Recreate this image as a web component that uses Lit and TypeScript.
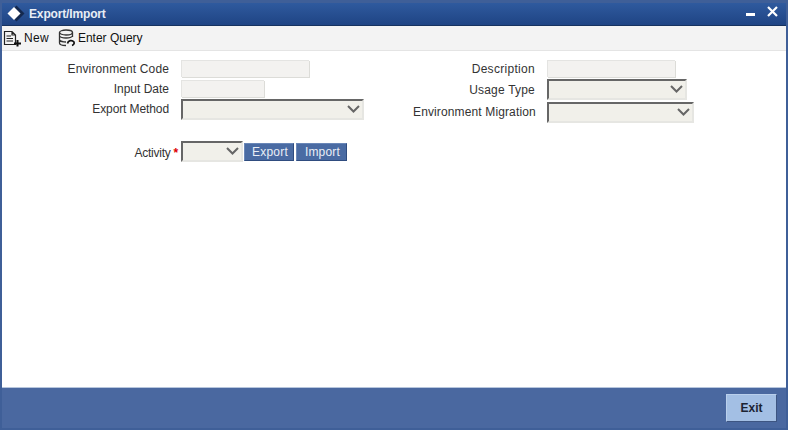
import { LitElement, html, css } from "lit";
import { customElement } from "lit/decorators.js";

@customElement("app-root")
export class AppRoot extends LitElement {
  static styles = css`
    :host { display: block; width: 788px; height: 430px; font-family: "Liberation Sans", Arial, sans-serif; font-size: 12px; color: #333; }
    .win { box-sizing: border-box; width: 788px; height: 430px; background: #3f5f98; padding: 3px 2px 2px; display: flex; flex-direction: column; }
    .title { height: 23px; flex: none; box-sizing: border-box; display: flex; align-items: center; background: linear-gradient(#2f5a9e, #1f4484); color: #fff; font-weight: bold; border-bottom: 1px solid #16325f; }
    .diamond { margin: 0 4px 0 5px; display: block; }
    .title span { flex: 1; color: #e8edf5; letter-spacing: -0.15px; }
    .ctl { display: block; margin-right: 6px; }
    .toolbar { height: 25px; flex: none; box-sizing: border-box; background: #f3f3f3; border-bottom: 1px solid #e4e4e4; display: flex; align-items: center; color: #111; font-size: 12px; padding-left: 1px; }
    .tool { display: flex; align-items: center; gap: 2px; margin-right: 10px; }
    .tool.new { letter-spacing: 0.3px; margin-right: 9px; }
    .body { flex: 1; background: #fff; padding: 9px 0 0; }
    .cols { display: flex; }
    .col { display: flex; flex-direction: column; }
    .col.l { width: 411px; }
    .row { display: flex; align-items: center; }
    .lab { text-align: right; color: #333; letter-spacing: 0.13px; white-space: nowrap; }
    .l .lab { width: 167px; margin-right: 12px; }
    .r .lab { width: 122px; margin-right: 12px; }
    .lab.up { padding-bottom: 2px; }
    .lab.tight { letter-spacing: -0.1px; }
    .lab.flat { letter-spacing: 0; }
    .lab.wide { letter-spacing: 0.3px; }
    .lab.mid { letter-spacing: 0.2px; }
    .inp { box-sizing: border-box; height: 17px; background: #f3f2f0; border: 1px solid #e4e4e2; border-width: 1px 0 0 1px; box-shadow: 1px 1px 0 #dcdcd8; }
    .w129 { width: 128px; }
    .w84 { width: 83px; }
    .gap3 { margin-top: 3px; }
    .gap2 { margin-top: 2px; }
    .w183 { width: 183px; }
    .w62 { width: 62px; }
    .w140 { width: 140px; }
    .w147 { width: 147px; }
    .sel { box-sizing: border-box; height: 21px; background: #f1f0ea; border-top: 2px solid #666; border-left: 2px solid #666; border-bottom: 2px solid #e6e6e2; border-right: 2px solid #e6e6e2; display: flex; align-items: center; justify-content: flex-end; padding-right: 2px; }
    .sel svg { display: block; margin-top: -2px; }
    .req { color: #d00; font-weight: bold; }
    .l .act { margin-top: 21px; }
    .l .act .lab { width: 179px; margin-right: 0; box-sizing: border-box; padding: 2px 3px 0 0; letter-spacing: -0.25px; }
    .btn { box-sizing: border-box; height: 18px; width: 50px; background: #4a6ba3; border: 1px solid; border-color: #6a87b8 #2f4c7f #2f4c7f #6a87b8; color: #e9eef6; font: 12px "Liberation Sans", Arial, sans-serif; letter-spacing: 0.2px; padding: 1px 0 0 2px; margin-left: 1px; }
    .btn + .btn { width: 51px; margin-left: 2px; }
    .footer { height: 41px; flex: none; box-sizing: border-box; background: #4a68a0; border-top: 1px solid #b7c6dd; display: flex; align-items: center; justify-content: flex-end; padding-right: 9px; }
    .exit { box-sizing: border-box; width: 51px; height: 28px; background: #a3bfe4; border: 1px solid; border-color: #b9cfec #3d5582 #3d5582 #b9cfec; font: bold 12px "Liberation Sans", Arial, sans-serif; color: #1c2433; padding: 0; }
  `;

  chevron() {
    return html`<svg width="13" height="8" viewBox="0 0 13 8"><path d="M1 1 6.5 6.5 12 1" fill="none" stroke="#666" stroke-width="2"/></svg>`;
  }

  render() {
    return html`<div class="win">
      <div class="title">
        <svg class="diamond" width="18" height="18" viewBox="0 0 18 18"><path d="M9.5 .5 17.5 8.5 9.5 16.5 1.5 8.5z" fill="#14294f"/><path d="M7 2 13.5 8.5 7 15 .5 8.5z" fill="#fff"/></svg>
        <span>Export/Import</span>
        <svg class="ctl" width="34" height="16" viewBox="0 0 34 16"><rect x="0" y="7" width="9" height="3" fill="#fff"/><path d="M22 1 31 10M31 1 22 10" stroke="#fff" stroke-width="2.2" fill="none"/></svg>
      </div>
      <div class="toolbar">
        <div class="tool new">
          <svg width="19" height="18" viewBox="0 0 19 18"><path d="M1.5 2.5H9L12.5 6V15.5H1.5zM9 2.5V6H12.5M3.5 7H8M3.5 9.5H10M3.5 12H10" fill="none" stroke="#222" stroke-width="1.2"/><path d="M14.5 11V17.5M11 14.5H18" stroke="#111" stroke-width="2"/></svg>
          New
        </div>
        <div class="tool">
          <svg width="18" height="18" viewBox="0 0 18 18"><ellipse cx="8" cy="3.5" rx="6.5" ry="2.5" fill="none" stroke="#333" stroke-width="1.3"/><path d="M1.5 3.5V14C1.5 15.5 4 16.5 8 16.5M14.5 3.5V8M1.5 7C2.5 8.5 5 9 8 9S13.5 8.5 14.5 7M1.5 11C2.5 12.3 5 13 8 13" fill="none" stroke="#333" stroke-width="1.3"/><path d="M9.5 14.5C10 11.5 14 10.5 16 13 16.6 14.5 15.5 16 14 16.5" fill="none" stroke="#111" stroke-width="1.7"/></svg>
          Enter Query
        </div>
      </div>
      <div class="body">
        <div class="cols">
          <div class="col l">
            <div class="row"><div class="lab">Environment Code</div><div class="inp w129"></div></div>
            <div class="row gap3"><div class="lab flat">Input Date</div><div class="inp w84"></div></div>
            <div class="row gap2"><div class="lab up tight">Export Method</div><div class="sel w183">${this.chevron()}</div></div>
            <div class="row act"><div class="lab">Activity <span class="req">*</span></div><div class="sel w62">${this.chevron()}</div><button class="btn">Export</button><button class="btn">Import</button></div>
          </div>
          <div class="col r">
            <div class="row"><div class="lab wide">Description</div><div class="inp w129"></div></div>
            <div class="row gap2"><div class="lab mid">Usage Type</div><div class="sel w140">${this.chevron()}</div></div>
            <div class="row gap2"><div class="lab up">Environment Migration</div><div class="sel w147">${this.chevron()}</div></div>
          </div>
        </div>
      </div>
      <div class="footer"><button class="exit">Exit</button></div>
    </div>`;
  }
}
